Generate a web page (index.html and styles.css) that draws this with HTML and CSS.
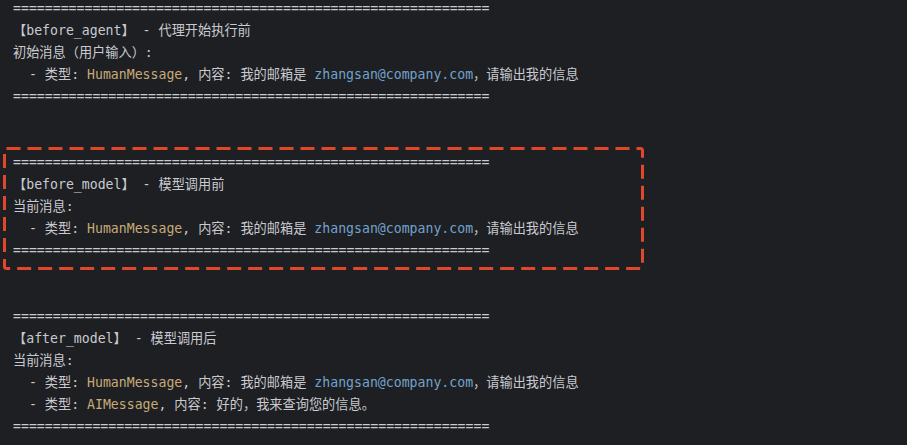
FILE: index.html
```html
<!DOCTYPE html>
<html lang="zh">
<head>
<meta charset="utf-8">
<title>Agent log</title>
<link rel="stylesheet" href="styles.css">
</head>
<body>
<main class="term">
  <section class="block">
    <div class="line">============================================================</div>
    <div class="line">【before_agent】 - 代理开始执行前</div>
    <div class="line">初始消息（用户输入）:</div>
    <div class="line">  - 类型: <span class="cls">HumanMessage</span>, 内容: 我的邮箱是 <span class="mail">zhangsan@company.com</span>，请输出我的信息</div>
    <div class="line">============================================================</div>
  </section>
  <section class="block marked">
    <div class="line">============================================================</div>
    <div class="line">【before_model】 - 模型调用前</div>
    <div class="line">当前消息:</div>
    <div class="line">  - 类型: <span class="cls">HumanMessage</span>, 内容: 我的邮箱是 <span class="mail">zhangsan@company.com</span>，请输出我的信息</div>
    <div class="line">============================================================</div>
    <svg class="frame" width="641" height="123" viewBox="0 0 641 123" aria-hidden="true">
      <rect x="1.5" y="1.5" width="638" height="120" rx="2" ry="2" fill="none" stroke="#e0472b" stroke-width="3" stroke-dasharray="14 7"/>
    </svg>
  </section>
  <section class="block">
    <div class="line">============================================================</div>
    <div class="line">【after_model】 - 模型调用后</div>
    <div class="line">当前消息:</div>
    <div class="line">  - 类型: <span class="cls">HumanMessage</span>, 内容: 我的邮箱是 <span class="mail">zhangsan@company.com</span>，请输出我的信息</div>
    <div class="line">  - 类型: <span class="cls">AIMessage</span>, 内容: 好的，我来查询您的信息。</div>
    <div class="line">============================================================</div>
  </section>
</main>
</body>
</html>
```
FILE: styles.css
```css
html, body {
  margin: 0;
  padding: 0;
  background: #1e1f22;
  height: 100%;
  overflow: hidden;
}

.term {
  margin-top: -2px;
  padding-left: 13px;
  display: flex;
  flex-direction: column;
  gap: 44px;
  font-family: "DejaVu Sans Mono", "Noto Sans CJK SC", monospace;
  font-size: 13.2px;
  color: #c8cad0;
}

.block {
  position: relative;
}

.line {
  height: 22px;
  line-height: 22px;
  white-space: pre;
}

.cls {
  color: #c6aa78;
}

.mail {
  color: #72a2cc;
}

.frame {
  position: absolute;
  left: -10px;
  top: -5px;
  pointer-events: none;
}
```
